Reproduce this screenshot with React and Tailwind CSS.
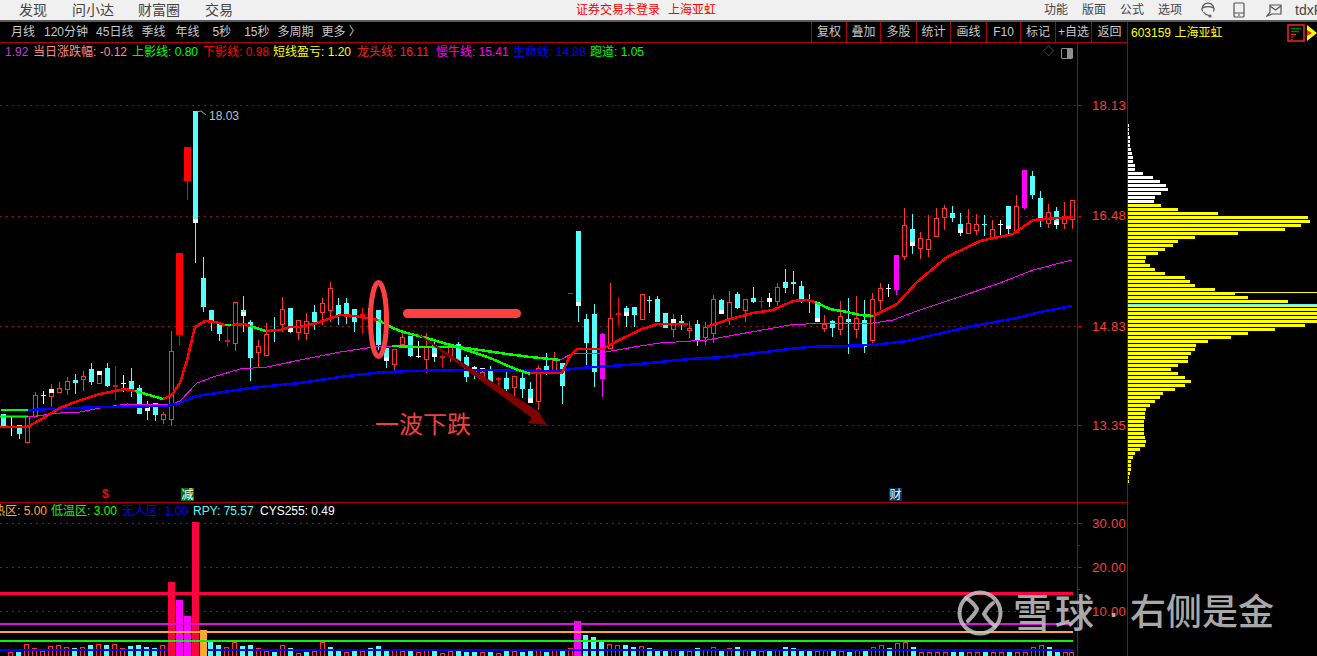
const FONT = '"Liberation Sans", "Noto Sans CJK SC", sans-serif';

// [x, type, bodyTop, bodyBottom, high, low, capStart, capEnd]
const candles = [
  [3, 'c', 414, 427, 414, 428, 427, 428], [11, 'w', 426, 426, 417, 436], [19, 'c', 425, 434, 425, 439], [27, 'r', 416, 442, 416, 442],
  [35, 'r', 395, 416, 392, 416], [43, 'w', 395, 395, 391, 404], [51, 'r', 389, 396, 384, 407, 389, 393], [59, 'r', 388, 392, 382, 392],
  [67, 'r', 381, 389, 377, 395], [75, 'c', 380, 383, 374, 394], [83, 'r', 376, 379, 371, 391], [91, 'c', 369, 382, 363, 385],
  [99, 'r', 371, 383, 371, 383, 371, 375], [107, 'c', 368, 386, 363, 387], [115, 'R', 385, 387, 366, 400], [123, 'w', 383, 383, 375, 392],
  [131, 'c', 381, 390, 368, 397], [139, 'c', 388, 414, 385, 414], [147, 'c', 407, 411, 401, 420, 407, 411], [155, 'c', 403, 415, 403, 421],
  [163, 'r', 414, 419, 412, 424], [171, 'r', 351, 419, 331, 426], [179, 'R', 253, 335, 253, 345], [187, 'R', 147, 181, 147, 200],
  [195, 'c', 111, 223, 111, 263, 219, 223], [203, 'c', 278, 307, 257, 312], [211, 'c', 310, 321, 310, 331], [219, 'c', 324, 334, 324, 341],
  [227, 'R', 340, 342, 327, 347], [235, 'r', 302, 343, 302, 351], [243, 'c', 310, 316, 296, 332, 312, 316], [250, 'c', 322, 358, 320, 381],
  [258, 'r', 346, 352, 340, 367], [266, 'r', 334, 355, 323, 355], [274, 'c', 329, 330, 317, 342], [282, 'r', 309, 324, 297, 332],
  [290, 'c', 308, 330, 308, 333, 327, 332], [298, 'r', 320, 332, 320, 340], [306, 'r', 321, 333, 313, 340], [314, 'c', 312, 322, 305, 330],
  [322, 'r', 303, 312, 298, 325], [330, 'r', 288, 310, 282, 322], [338, 'c', 305, 315, 298, 325], [346, 'c', 303, 314, 298, 324],
  [354, 'c', 309, 322, 309, 332], [362, 'R', 314, 316, 308, 334], [370, 'c', 308, 316, 303, 325], [378, 'c', 310, 345, 310, 350],
  [386, 'c', 348, 361, 348, 368, 357, 361], [394, 'r', 349, 364, 349, 370], [402, 'r', 337, 344, 333, 348], [410, 'c', 336, 356, 336, 357],
  [418, 'w', 356, 356, 341, 358], [426, 'r', 347, 359, 333, 373], [434, 'c', 345, 357, 340, 362, 353, 357], [442, 'R', 356, 358, 355, 368],
  [450, 'r', 345, 355, 343, 362], [458, 'c', 344, 361, 342, 361], [466, 'c', 357, 377, 355, 382], [474, 'c', 367, 373, 366, 379, 367, 369],
  [482, 'r', 372, 376, 368, 380, 368, 369], [490, 'c', 370, 383, 366, 385], [498, 'R', 378, 380, 377, 385], [506, 'c', 378, 389, 369, 398],
  [514, 'r', 376, 387, 376, 398], [522, 'c', 378, 389, 373, 398], [530, 'c', 389, 403, 382, 403, 398, 403], [538, 'r', 368, 401, 365, 410],
  [546, 'c', 366, 370, 353, 375], [554, 'r', 359, 370, 352, 372], [562, 'c', 363, 386, 363, 404], [570, 'R', 293, 294, 293, 294],
  [578, 'c', 231, 306, 231, 322, 302, 306], [586, 'c', 319, 343, 314, 365], [594, 'c', 314, 372, 304, 387], [602, 'm', 334, 379, 333, 397],
  [610, 'r', 318, 348, 283, 348], [618, 'R', 313, 315, 297, 325], [626, 'c', 308, 316, 306, 327, 312, 316], [634, 'c', 307, 315, 307, 327],
  [642, 'r', 294, 319, 294, 319], [649, 'c', 300, 301, 296, 313], [657, 'c', 299, 322, 296, 322], [665, 'c', 313, 328, 313, 328],
  [673, 'r', 319, 329, 314, 337, 319, 323], [681, 'c', 321, 323, 315, 330], [689, 'r', 328, 330, 321, 338], [697, 'c', 324, 340, 320, 346],
  [705, 'r', 327, 337, 322, 345], [713, 'r', 299, 333, 295, 343], [721, 'c', 300, 314, 299, 314, 310, 314], [729, 'r', 302, 319, 291, 325],
  [737, 'c', 294, 308, 292, 309], [745, 'r', 299, 310, 299, 322], [753, 'c', 298, 302, 287, 303], [761, 'R', 301, 302, 297, 308],
  [769, 'w', 298, 302, 293, 307], [777, 'r', 287, 301, 283, 306], [785, 'c', 282, 288, 269, 293], [793, 'c', 282, 284, 271, 294],
  [801, 'c', 286, 300, 281, 303], [809, 'c', 300, 300, 294, 313], [817, 'c', 302, 322, 302, 322, 318, 322], [824, 'r', 324, 328, 315, 332],
  [832, 'c', 321, 328, 320, 337], [840, 'r', 316, 329, 301, 335], [848, 'c', 319, 322, 298, 354], [856, 'r', 318, 329, 296, 338],
  [864, 'c', 320, 347, 300, 353, 343, 346], [872, 'r', 299, 340, 293, 343], [880, 'r', 288, 300, 283, 310], [888, 'w', 288, 288, 284, 297],
  [896, 'm', 255, 290, 255, 295], [904, 'r', 225, 256, 208, 260], [912, 'c', 229, 246, 214, 254, 242, 246], [920, 'r', 238, 248, 232, 259],
  [928, 'r', 239, 249, 215, 257], [936, 'r', 218, 236, 208, 236], [944, 'r', 208, 217, 205, 230], [952, 'c', 213, 218, 206, 222],
  [960, 'c', 224, 233, 213, 236, 229, 233], [968, 'r', 223, 233, 209, 233], [976, 'r', 224, 230, 214, 235], [984, 'c', 224, 225, 215, 236],
  [992, 'r', 229, 237, 220, 240], [1000, 'w', 224, 224, 220, 236], [1008, 'c', 206, 229, 206, 234, 225, 229], [1016, 'r', 206, 232, 195, 232],
  [1024, 'm', 170, 208, 170, 210], [1032, 'c', 176, 195, 171, 199], [1040, 'c', 198, 220, 191, 227], [1048, 'r', 212, 223, 204, 228],
  [1056, 'c', 211, 225, 207, 229, 221, 225], [1064, 'r', 216, 223, 202, 229], [1072, 'r', 200, 219, 200, 229],
];

const CANDLE_COLORS = { r: '#ff3232', R: '#ff0000', c: '#54ffff', w: '#ffffff', m: '#ff00ff' };

const redLine = [
  '0,427 27,427 40,420 60,408 75,402 90,397 100,394 115,391 125,389 135,391',
  '163,399 172,395 180,383 187,360 195,327 205,321 215,322 225,325',
  '231,325 245,324 250,326',
  '266,331 280,330 290,327 300,327 320,322 340,315 355,316 378,320',
  '530,373 562,373 570,356 577,349 603,349 617,341 640,330 657,324 688,324',
  '707,327 727,320 753,313 773,310 793,301 807,300 815,302',
  '873,316 897,304 917,282 947,257 980,241 1013,234 1033,220 1073,217',
];
const greenLine = [
  '135,391 163,399', '225,325 231,325', '250,326 266,331',
  '378,320 393,328 403,332 423,337 440,342 458,347 490,358 513,368 530,374',
  '815,302 830,309 847,312 860,315 873,316',
  '392,346 420,347 457,347 480,350 507,354 530,357 560,360',
];
const magentaLine = '28,417 60,413 80,412 100,408 127,404 170,405 180,401 197,383 213,377 240,369 267,367 300,360 340,352 380,346 392,346 460,348 560,360 573,353 600,353 640,346 660,343 707,340 740,334 790,325 823,323 873,323 893,320 917,311 950,300 1000,283 1033,270 1072,260';
const blueLine = '28,410 100,407 167,406 180,403 197,396 217,393 250,388 300,383 340,377 373,373 407,371 473,370 557,371 580,368 640,364 690,359 723,357 807,347 873,345 907,341 973,326 1017,318 1040,312 1072,306';

// top edge of each small volume bar, red hollow unless marked cyan
const volumes = [
  [11, 'r', 652], [19, 'c', 652], [27, 'r', 644], [35, 'r', 648], [43, 'r', 651], [51, 'r', 646], [59, 'r', 645], [67, 'r', 647], [75, 'c', 648], [83, 'r', 647],
  [91, 'c', 645], [99, 'r', 644], [107, 'c', 645], [115, 'r', 644], [123, 'r', 648], [131, 'c', 646], [139, 'c', 645], [147, 'c', 647], [155, 'c', 648], [163, 'r', 645],
  [211, 'c', 642], [219, 'c', 645], [227, 'r', 647], [235, 'r', 642], [243, 'c', 646], [251, 'c', 645], [259, 'r', 648], [267, 'r', 651], [275, 'c', 652], [283, 'r', 645],
  [291, 'c', 648], [299, 'r', 653], [307, 'c', 652], [315, 'r', 651], [323, 'r', 642], [331, 'c', 647], [339, 'c', 651], [347, 'r', 652], [355, 'c', 650], [363, 'r', 651],
  [371, 'c', 648], [379, 'c', 646], [387, 'c', 651], [395, 'r', 650], [403, 'r', 651], [411, 'c', 650], [419, 'r', 652], [427, 'r', 650], [435, 'c', 651], [443, 'r', 653],
  [451, 'r', 651], [459, 'c', 651], [467, 'c', 652], [475, 'c', 652], [483, 'r', 652], [491, 'c', 652], [499, 'r', 653], [507, 'c', 651], [515, 'r', 651], [523, 'c', 652],
  [531, 'c', 650], [539, 'r', 649], [547, 'c', 652], [555, 'r', 650], [563, 'c', 650], [571, 'r', 648], [586, 'c', 635], [594, 'c', 637], [602, 'c', 640], [610, 'r', 644],
  [618, 'r', 645], [626, 'c', 645], [634, 'c', 647], [642, 'r', 646], [650, 'c', 648], [658, 'c', 650], [666, 'c', 651], [674, 'r', 650], [682, 'c', 651], [690, 'r', 651],
  [698, 'c', 648], [706, 'r', 649], [714, 'r', 647], [722, 'c', 649], [730, 'r', 648], [738, 'c', 647], [746, 'r', 650], [754, 'c', 651], [762, 'r', 651], [770, 'c', 651],
  [778, 'r', 649], [786, 'c', 647], [794, 'c', 648], [802, 'c', 650], [810, 'c', 651], [818, 'r', 651], [826, 'r', 650], [834, 'c', 651], [842, 'r', 651], [850, 'c', 652],
  [858, 'r', 650], [866, 'c', 649], [874, 'r', 647], [882, 'r', 645], [890, 'c', 648], [898, 'r', 643], [906, 'r', 642], [914, 'c', 647], [922, 'r', 652], [930, 'r', 652],
  [938, 'r', 652], [946, 'r', 652], [954, 'c', 652], [962, 'c', 652], [970, 'r', 652], [978, 'r', 652], [986, 'c', 652], [994, 'r', 652], [1002, 'r', 652], [1010, 'c', 652],
  [1018, 'r', 652], [1026, 'r', 652], [1034, 'r', 647], [1042, 'r', 645], [1050, 'c', 647], [1058, 'c', 652], [1066, 'r', 652], [1072, 'r', 652],
];

const bigBars = [
  [168, 582, '#ff0040'], [176, 600, '#ff00ff'], [184, 616, '#ff00ff'], [192, 522, '#ff0040'], [200, 630, '#ffa830'], [574, 621, '#ff00ff'],
];

// volume profile, one 3px row every 4px from y 124, widths in px
const profile = [
  1, 1, 1, 2, 2, 2, 3, 4, 5, 5, 7, 7, 15, 25, 32, 38, 40, 33, 27, 26,
  33, 50, 90, 180, 182, 173, 157, 110, 67, 50, 45, 37, 30, 18, 17, 22, 27, 37, 57, 62,
  67, 87, 107, 120, 160, 190, 190, 190, 190, 190, 177, 147, 120, 103, 80, 68, 67, 63, 60, 60,
  50, 43, 50, 57, 63, 57, 47, 35, 32, 27, 22, 18, 17, 17, 16, 16, 16, 16, 17, 18,
  17, 12, 7, 5, 3, 3, 3, 2, 1, 1,
];

const topMenu = [['发现', 'ml-[19px]'], ['问小达', 'ml-[25px]'], ['财富圈', 'ml-[24px]'], ['交易', 'ml-[25px]']];
const rightMenu = ['功能', '版面', '公式', '选项'];
const periods = [
  ['月线', 'ml-[11px]'], ['120分钟', 'ml-[9px]'], ['45日线', 'ml-[8px]'], ['季线', 'ml-[8px]'], ['年线', 'ml-[10px]'],
  ['5秒', 'ml-[13px]'], ['15秒', 'ml-[13px]'], ['多周期', 'ml-[8px]'], ['更多 〉', 'ml-[8px]'],
];
const tools = [
  ['复权', 'w-[35px]'], ['叠加', 'w-[34px]'], ['多股', 'w-[36px]'], ['统计', 'w-[34px]'], ['画线', 'w-[36px]'],
  ['F10', 'w-[34px]'], ['标记', 'w-[35px]'], ['+自选', 'w-[36px]'], ['返回', 'w-[36px]'],
];
const legend = [
  ['1.92', 'text-[#c040d0] w-[28px]'], ['当日涨跌幅: -0.12', 'text-[#ff8a80] w-[99px]'], ['上影线: 0.80', 'text-[#00ff00] w-[71px]'],
  ['下影线: 0.98', 'text-[#ff0000] w-[70px]'], ['短线盈亏: 1.20', 'text-[#ffff00] w-[84px]'], ['龙头线: 16.11', 'text-[#ff2020] w-[79px]'],
  ['慢牛线: 15.41', 'text-[#ff00ff] w-[77px]'], ['生命线: 14.88', 'text-[#0000ff] w-[77px]'], ['跑道: 1.05', 'text-[#00ff00]'],
];
const subLegend = [
  ['热区: 5.00', 'text-[#ffa830] w-[58px]'], ['低温区: 3.00', 'text-[#00ff00] w-[71px]'], ['无人区: 1.00', 'text-[#0000ff] w-[71px]'],
  ['RPY: 75.57', 'text-[#54ffff] w-[67px]'], ['CYS255: 0.49', 'text-white'],
];

function Candle({ d }) {
  const [x, type, top, bottom, high, low, capStart, capEnd] = d;
  const color = CANDLE_COLORS[type];
  const doji = bottom - top < 1;
  const tall = type === 'R' && bottom - top > 5;
  return (
    <g shapeRendering="crispEdges">
      <line x1={x + 0.5} x2={x + 0.5} y1={high} y2={low} stroke={color} />
      {doji ? (
        <rect x={x - 2} y={top} width={5} height={1} fill={color} />
      ) : type === 'r' ? (
        <rect x={x - 1.5} y={top + 0.5} width={4} height={bottom - top} fill="#000" stroke={color} />
      ) : (
        <rect x={tall ? x - 3 : x - 2} y={top} width={tall ? 7 : 5} height={bottom - top} fill={color} />
      )}
      {capStart && <rect x={x - 2} y={capStart} width={5} height={capEnd - capStart} fill="#fff" />}
    </g>
  );
}

function PriceChart() {
  return (
    <svg width="1127" height="613" viewBox="0 43 1127 613" className="block">
      {[105, 216, 326, 425, 523, 567, 611].map(y => (
        <g key={y} shapeRendering="crispEdges">
          <line x1="0" x2="1077" y1={y + 0.5} y2={y + 0.5} stroke="#901010" strokeDasharray="2 4" />
          <line x1="1077" x2="1082" y1={y + 0.5} y2={y + 0.5} stroke="#c00000" />
        </g>
      ))}
      <line x1="1077" x2="1080" y1="545.5" y2="545.5" stroke="#c00000" />
      <line x1="1077" x2="1080" y1="589.5" y2="589.5" stroke="#c00000" />

      {/* axes */}
      <line x1="1077.5" x2="1077.5" y1="42" y2="656" stroke="#b00000" />
      <line x1="0" x2="1127" y1="502.5" y2="502.5" stroke="#b00000" />

      {[['18.13', 110], ['16.48', 220], ['14.83', 331], ['13.35', 430], ['30.00', 528], ['20.00', 572], ['10.00', 616]].map(([t, y]) => (
        <text key={t} x="1092" y={y} fill="#ff3c3c" fontSize="13" letterSpacing="0.3" fontFamily={FONT}>{t}</text>
      ))}

      {/* price marks */}
      <rect x="1" y="409" width="27" height="2" fill="#00ff00" />
      {candles.map(d => <Candle key={d[0]} d={d} />)}

      <g fill="none" shapeRendering="crispEdges">
        <polyline points={magentaLine} stroke="#ff00ff" strokeWidth="1" />
        <polyline points={blueLine} stroke="#0000ff" strokeWidth="2.5" />
        {redLine.map(p => <polyline key={p} points={p} stroke="#ff0000" strokeWidth="2.5" />)}
        {greenLine.map(p => <polyline key={p} points={p} stroke="#00ff00" strokeWidth="2.5" />)}
      </g>
      <line x1="0" x2="28" y1="416.5" y2="416.5" stroke="#00ff00" strokeWidth="2" />

      <polyline points="197,112 201,111 206,115" fill="none" stroke="#a0a0a0" />
      <text x="209" y="120" fill="#c0c0c0" fontSize="12" fontFamily={FONT}>18.03</text>

      {/* hand drawn marks */}
      <ellipse cx="378.5" cy="319.5" rx="8" ry="37" fill="none" stroke="#ff4040" strokeWidth="5" />
      <rect x="403" y="309" width="118" height="9" rx="4.5" fill="#ff4040" />
      <polygon points="402,323 539,412 537,409 547,425 528,423 532,418" fill="#800000" />

      {/* sub chart */}
      {volumes.map(([x, k, top]) => (
        k === 'c'
          ? <rect key={x} x={x - 3} y={top} width={5} height={656 - top} fill="#54ffff" />
          : <rect key={x} x={x - 2.5} y={top + 0.5} width={4} height={656 - top} fill="none" stroke="#ff3232" />
      ))}
      {bigBars.map(([x, y, c]) => <rect key={x} x={x} y={y} width={7} height={656 - y} fill={c} />)}
      <rect x="0" y="592" width="1073" height="3" fill="#ff0040" />
      <rect x="0" y="623" width="1073" height="2" fill="#e010e0" />
      <rect x="0" y="631" width="1073" height="2" fill="#ffa830" />
      <rect x="0" y="640" width="1073" height="2" fill="#10f010" />
      <rect x="0" y="649" width="168" height="2" fill="#0000ff" />
      <rect x="207" y="649" width="866" height="2" fill="#0000ff" />
    </svg>
  );
}

function VolumeProfile() {
  return (
    <svg width="190" height="380" viewBox="0 120 190 380" className="block">
      {profile.map((w, i) => (
        <rect key={i} x="0" y={124 + i * 4} width={w} height="3" fill={i < 20 ? '#ffffff' : '#ffff00'} />
      ))}
      <rect x="0" y="292" width="190" height="1" fill="#ffff00" />
      <rect x="0" y="304" width="190" height="1" fill="#54ffff" />
    </svg>
  );
}

function TopBar() {
  return (
    <div className="flex h-[22px] shrink-0 items-center bg-[#f0f0f0] border-b-2 border-[#5a5a5a] whitespace-nowrap text-[#444]">
      {topMenu.map(([t, m]) => <span key={t} className={`text-[14px] ${m}`}>{t}</span>)}
      <span className="ml-[343px] text-[12px] text-[#ff0000]">证券交易未登录</span>
      <span className="ml-[8px] text-[12px] text-[#ff0000]">上海亚虹</span>
      <div className="ml-[328px] flex gap-[14px] text-[12px]">
        {rightMenu.map(t => <span key={t}>{t}</span>)}
      </div>
      <svg width="16" height="16" viewBox="0 0 16 16" fill="none" stroke="#555" strokeWidth="1.2" className="ml-[18px] shrink-0">
        <path d="M2.5 9.5A6 6 0 1 1 13.5 9.5" />
        <path d="M2.5 6.5C3.5 4 12.5 4 13.5 6.5" />
        <path d="M3.5 10C5 12.5 7 13 9 13.5" />
        <circle cx="10" cy="14" r="1" />
      </svg>
      <svg width="12" height="16" viewBox="0 0 12 16" fill="none" stroke="#555" strokeWidth="1.2" className="ml-[17px] shrink-0">
        <rect x="1" y="1" width="10" height="14" rx="1" />
        <path d="M1 11H11M5 13H7" />
      </svg>
      <svg width="16" height="13" viewBox="0 0 16 13" fill="none" stroke="#555" strokeWidth="1.2" className="ml-[21px] shrink-0">
        <path d="M4 1H15V10H6L1 12L4 8Z" />
        <path d="M4 2L9.5 6L15 2" />
      </svg>
      <span className="ml-[13px] text-[14px]">tdxP</span>
    </div>
  );
}

function Toolbar() {
  return (
    <div className="flex h-[21px] shrink-0 items-center text-[12px] text-[#c8c8c8] border-b border-[#b00000]">
      {periods.map(([t, m]) => <span key={t} className={`whitespace-nowrap ${m}`}>{t}</span>)}
      <div className="ml-auto flex h-full">
        {tools.map(([t, w]) => (
          <span key={t} className={`flex items-center justify-center border-l border-[#b00000] ${w}`}>{t}</span>
        ))}
      </div>
    </div>
  );
}

function StockTag() {
  return (
    <div className="flex h-[21px] items-center pl-[3px] text-[12px] text-[#ffff00]">
      <span className="whitespace-nowrap">603159 上海亚虹</span>
      <svg width="30" height="18" viewBox="0 0 30 18" className="ml-auto shrink-0">
        <rect x="1" y="1" width="16" height="16" fill="none" stroke="#ff2020" strokeWidth="1.5" />
        <path d="M4 4.5H14" stroke="#008000" strokeWidth="1.5" />
        <path d="M4 7.5H12" stroke="#008000" strokeWidth="1.5" />
        <path d="M4 10.5H9" stroke="#ff2020" strokeWidth="1.5" />
        <path d="M4 13H7M4 15.5H5.5" stroke="#ff2020" strokeWidth="1.2" />
        <polygon points="20,1 30,9 20,17" fill="#ffff00" />
        <polygon points="20,6 25,9 20,12" fill="#ff2020" />
      </svg>
    </div>
  );
}

function Watermark() {
  return (
    <div className="absolute left-[957px] top-[590px] flex items-center text-[36px] font-medium leading-none text-[#c0c0c0]/90 pointer-events-none whitespace-nowrap">
      <svg width="46" height="46" viewBox="0 0 46 46" fill="none" stroke="#c4c4c4" strokeOpacity="0.85" strokeWidth="4" strokeLinecap="round" strokeLinejoin="round">
        <circle cx="23" cy="23" r="20.5" />
        <path d="M9 8C14 11 18 15 20 19C19 23 15 27 11 31" />
        <path d="M36 13C32 16 29 20 27 24C30 29 34 33 38 36" />
      </svg>
      <span className="ml-[10px] text-[39px] tracking-[3px]">雪球</span>
      <span className="w-[33px] text-center">·</span>
      <span>右侧是金</span>
    </div>
  );
}

export default function App() {
  return (
    <div className="relative flex h-[656px] w-[1317px] flex-col overflow-hidden bg-black" style={{ fontFamily: FONT }}>
      <TopBar />
      <div className="flex min-h-0 flex-1">
        <div className="flex w-[1128px] shrink-0 flex-col border-r border-[#b00000]">
          <Toolbar />
          <div className="relative flex-1 overflow-hidden">
            <PriceChart />
            {/* overlay legends and event tags */}
            <div className="absolute left-[5px] top-[1px] flex h-[16px] items-center text-[12px] whitespace-nowrap">
              {legend.map(([t, c]) => <span key={t} className={c}>{t}</span>)}
            </div>
            <span className="absolute left-[1043px] top-[3px] text-[11px] leading-none text-[#808080]">◇</span>
            <span className="absolute left-[1061px] top-[5px] h-[11px] w-[12px] rounded-[1px] border border-[#909090] bg-[linear-gradient(90deg,#000_50%,#909090_50%)]" />
            <span className="absolute left-[102px] top-[445px] text-[12px] font-bold leading-none text-[#ff0000]">$</span>
            <span className="absolute left-[181px] top-[445px] flex h-[13px] w-[13px] items-center justify-center bg-[#087008] text-[12px] leading-none text-white">减</span>
            <span className="absolute left-[889px] top-[445px] flex h-[13px] w-[13px] items-center justify-center bg-[#0a3060] text-[12px] leading-none text-white">财</span>
            <div className="absolute left-[-7px] top-[460px] flex h-[16px] items-center text-[12px] whitespace-nowrap">
              {subLegend.map(([t, c]) => <span key={t} className={c}>{t}</span>)}
            </div>
            <span className="absolute left-[375px] top-[367px] text-[24px] leading-[30px] text-[#f04040]">一波下跌</span>
          </div>
        </div>
        <div className="flex min-w-0 flex-1 flex-col">
          <StockTag />
          <div className="pt-[77px]">
            <VolumeProfile />
          </div>
        </div>
      </div>
      <Watermark />
    </div>
  );
}
